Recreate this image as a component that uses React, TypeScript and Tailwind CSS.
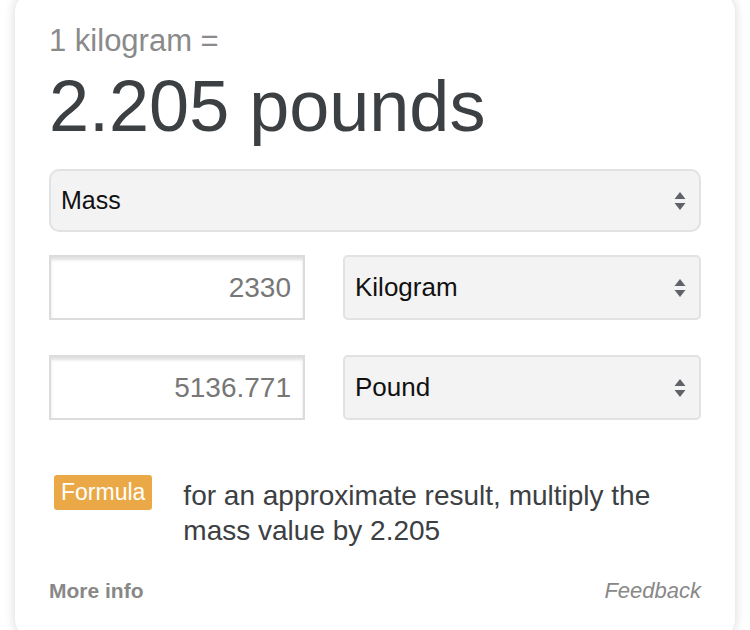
import React from "react";

function Arrows() {
  return (
    <svg width="12" height="22" viewBox="0 0 12 22" className="shrink-0">
      <path d="M0.5 9 L6 2 L11.5 9 Z" fill="#5f6368" />
      <path d="M0.5 13 L6 20 L11.5 13 Z" fill="#5f6368" />
    </svg>
  );
}

function SelectBox({ label, big }: { label: string; big?: boolean }) {
  return (
    <div
      className={
        "flex items-center justify-between border-2 border-[#e2e2e2] bg-[#f3f3f3] pl-[10px] pr-[13px] text-[#111] " +
        (big ? "h-[63px] rounded-[10px] text-[25px]" : "h-[65px] rounded-[5px] text-[26px]")
      }
    >
      <span>{label}</span>
      <Arrows />
    </div>
  );
}

function NumberBox({ value }: { value: string }) {
  return (
    <div className="flex h-[65px] items-center justify-end border-2 border-[#dcdcdc] bg-white pr-[12px] text-[28px] text-[#777] shadow-[inset_0_3px_3px_rgba(0,0,0,0.12)]">
      {value}
    </div>
  );
}

export default function App() {
  return (
    <div className="min-h-[630px] overflow-hidden bg-white px-[15px] font-['Liberation_Sans',Arial,sans-serif]">
      <div className="-mt-2 rounded-[20px] bg-white px-[34px] pt-[31px] pb-[36px] shadow-[0_0_12px_rgba(0,0,0,0.16)]">
        <div className="text-[31px] leading-[36px] text-[#8a8a8a]">1 kilogram =</div>
        <div className="mt-[7px] text-[72px] leading-[80px] text-[#3c4043]">2.205 pounds</div>

        <div className="mt-[23px]">
          <SelectBox label="Mass" big />
        </div>

        <div className="mt-[23px] grid grid-cols-[256px_1fr] gap-[38px]">
          <NumberBox value="2330" />
          <SelectBox label="Kilogram" />
        </div>
        <div className="mt-[35px] grid grid-cols-[256px_1fr] gap-[38px]">
          <NumberBox value="5136.771" />
          <SelectBox label="Pound" />
        </div>

        <div className="mt-[55px] ml-[5px] flex items-start gap-[31px]">
          <span className="shrink-0 rounded-[3px] bg-[#eaa946] px-[7px] text-[23px] leading-[35px] text-white">
            Formula
          </span>
          <p className="mt-[3px] text-[28px] leading-[35px] text-[#3c4043]">
            for an approximate result, multiply the mass value by 2.205
          </p>
        </div>

        <div className="mt-[31px] flex items-center justify-between leading-[24px] text-[#888]">
          <span className="text-[21px] font-bold">More info</span>
          <span className="text-[22px] italic">Feedback</span>
        </div>
      </div>
    </div>
  );
}
